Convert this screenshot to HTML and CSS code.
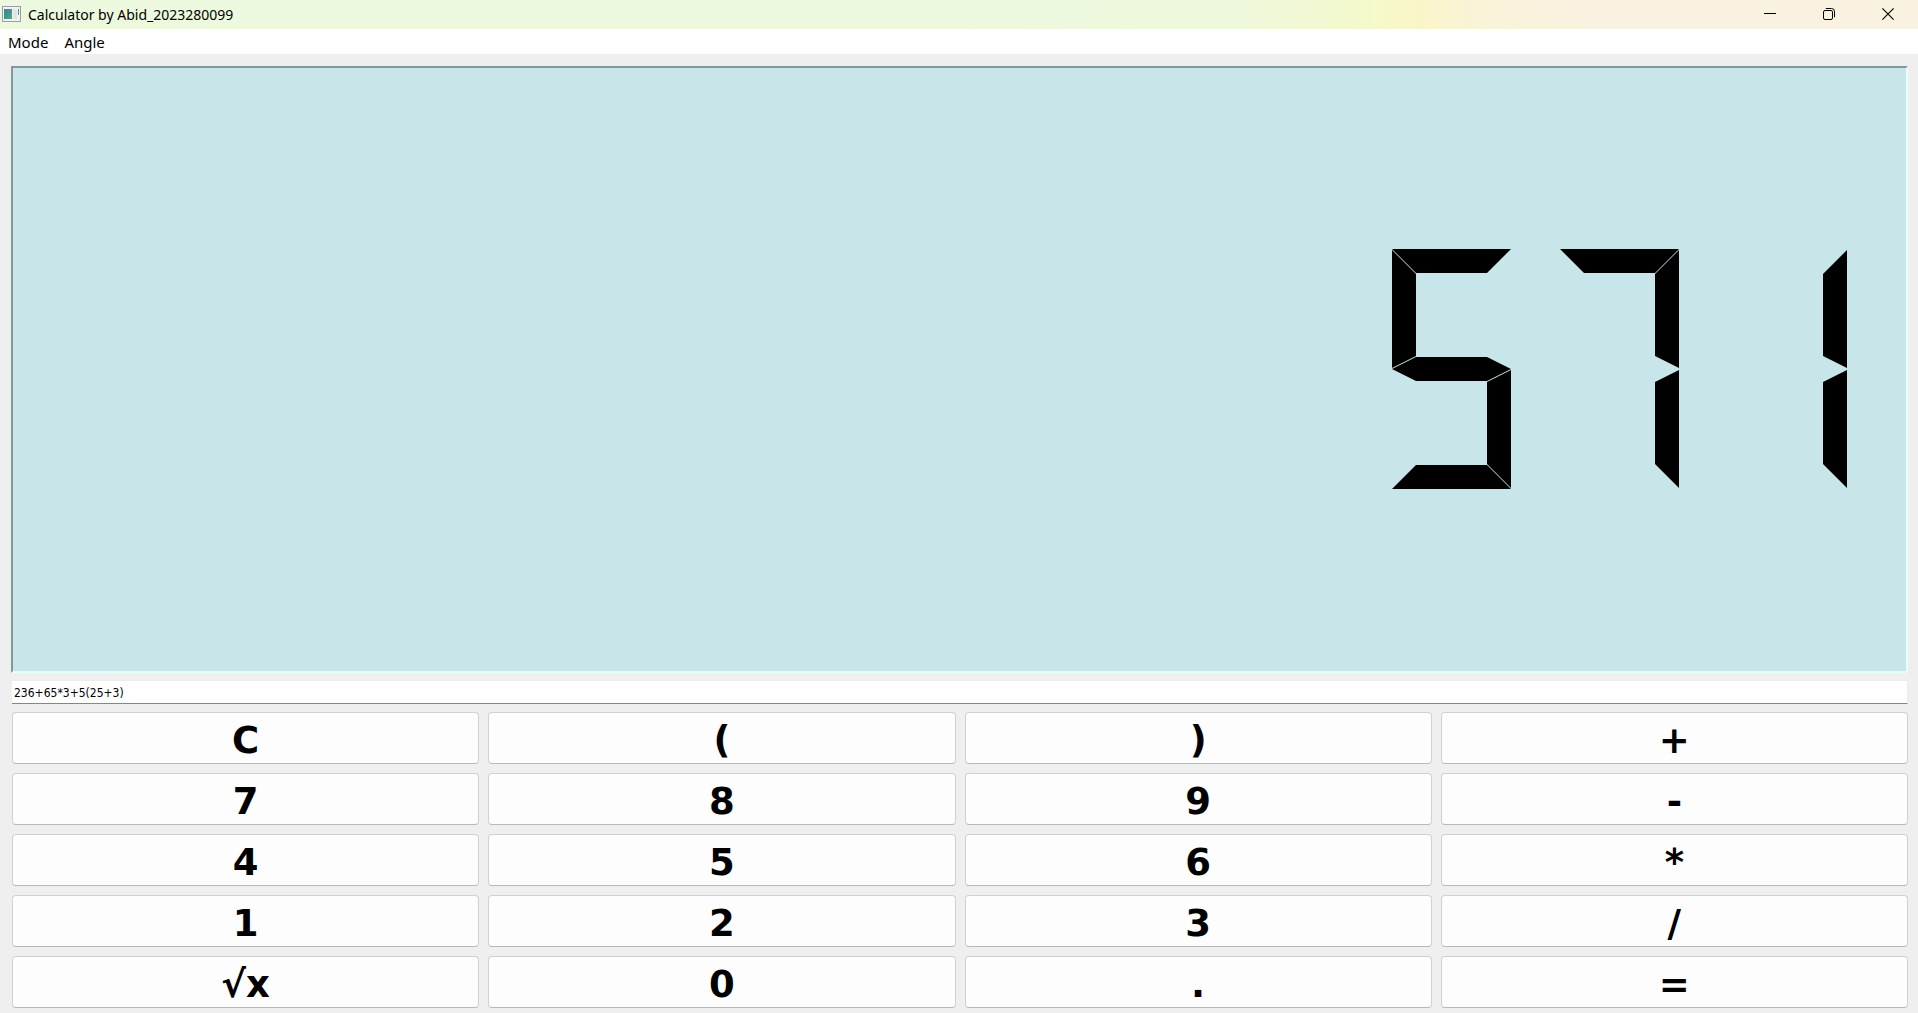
FILE: index.html
```html
<!DOCTYPE html>
<html lang="en">
<head>
<meta charset="utf-8">
<meta name="viewport" content="width=device-width, initial-scale=1">
<title>Calculator by Abid_2023280099</title>
<link rel="stylesheet" href="styles.css">
</head>
<body>
<header class="titlebar">
  <svg class="app-icon" width="19" height="16" viewBox="0 0 19 16" aria-hidden="true">
    <defs><linearGradient id="pane" x1="0" y1="0" x2="1" y2="1"><stop offset="0" stop-color="#3f7fa8"/><stop offset="1" stop-color="#4fa974"/></linearGradient></defs>
    <rect x=".5" y=".5" width="18" height="15" fill="#f2f2f4" stroke="#9a9fa6"/>
    <rect x="2" y="3" width="8" height="10" fill="url(#pane)"/>
    <rect x="11" y="3" width="4" height="10" fill="#e2e3e6"/>
    <rect x="16" y="3" width="1" height="6" fill="url(#pane)"/>
  </svg>
  <h1 class="title">Calculator by Abid_2023280099</h1>
  <div class="window-controls">
    <button class="window-button" type="button" aria-label="Minimize"><svg width="12" height="12" viewBox="0 0 12 12"><path d="M0 5.5H12" stroke="#000" fill="none"/></svg></button>
    <button class="window-button" type="button" aria-label="Restore"><svg width="12" height="12" viewBox="0 0 12 12" fill="none" stroke="#000"><rect x=".5" y="2.5" width="9" height="9" rx="1.5"/><path d="M2.8 .5H8.5Q11.5 .5 11.5 3.5V9.2"/></svg></button>
    <button class="window-button" type="button" aria-label="Close"><svg width="12" height="12" viewBox="0 0 12 12"><path d="M.4 .4L11.6 11.6M11.6 .4L.4 11.6" stroke="#000" stroke-width="1.1" fill="none"/></svg></button>
  </div>
</header>
<nav class="menubar">
  <button class="menu" type="button">Mode</button>
  <button class="menu" type="button">Angle</button>
</nav>
<main class="calculator">
  <output class="display" for="expression" aria-label="571">
    <span class="digit"><i class="seg top"></i><i class="seg upper-left"></i><i class="seg middle"></i><i class="seg lower-right"></i><i class="seg bottom"></i></span>
    <span class="digit"><i class="seg top"></i><i class="seg upper-right"></i><i class="seg lower-right"></i></span>
    <span class="digit"><i class="seg upper-right"></i><i class="seg lower-right"></i></span>
  </output>
  <input class="expression" id="expression" type="text" value="236+65*3+5(25+3)" aria-label="Expression">
  <div class="keypad">
    <button class="key" type="button">C</button>
    <button class="key" type="button">(</button>
    <button class="key" type="button">)</button>
    <button class="key" type="button">+</button>
    <button class="key" type="button">7</button>
    <button class="key" type="button">8</button>
    <button class="key" type="button">9</button>
    <button class="key" type="button">-</button>
    <button class="key" type="button">4</button>
    <button class="key" type="button">5</button>
    <button class="key" type="button">6</button>
    <button class="key" type="button">*</button>
    <button class="key" type="button">1</button>
    <button class="key" type="button">2</button>
    <button class="key" type="button">3</button>
    <button class="key" type="button">/</button>
    <button class="key" type="button">√x</button>
    <button class="key" type="button">0</button>
    <button class="key" type="button">.</button>
    <button class="key" type="button">=</button>
  </div>
</main>
</body>
</html>
```
FILE: styles.css
```css
* {
  box-sizing: border-box;
}

body {
  display: flex;
  flex-direction: column;
  min-height: 100vh;
  margin: 0;
  background: #efefef;
  color: #000;
  font-family: "Noto Sans", "Open Sans", sans-serif;
}

button {
  border: 0;
  background: none;
  color: inherit;
  font: inherit;
}

/* Title bar */
.titlebar {
  display: flex;
  align-items: center;
  height: 29px;
  padding: 0 1px 1px 2px;
  background: linear-gradient(to right, #edf9df 0%, #ecf9de 50%, #eef8dd 64%, #f2f8d2 69%, #f6f9c8 72%, #faf5c8 74%, #f9f3d8 77%, #f9f2e0 82%, #f9f2e0 100%);
}

.app-icon {
  margin-bottom: 1px;
}

.title {
  flex: 1;
  margin: 0 0 0 7px;
  padding-top: 2px;
  font-size: 14px;
  font-weight: 400;
  line-height: 26px;
}

.window-controls {
  display: flex;
}

.window-button {
  display: flex;
  align-items: center;
  justify-content: center;
  width: 59px;
  height: 28px;
  padding: 0;
}

/* Menu bar */
.menubar {
  display: flex;
  height: 25px;
  background: #fff;
}

.menu {
  padding: 1px 8px 0;
  font-size: 15px;
  line-height: 24px;
}

/* Calculator body */
.calculator {
  display: flex;
  flex: 1;
  flex-direction: column;
  padding: 12px 10px 5px 11px;
}

.display {
  display: flex;
  flex: 1;
  gap: 49px;
  align-items: center;
  justify-content: flex-end;
  min-height: 260px;
  padding: 0 59px 1px 0;
  border: 2px solid;
  border-color: #859899 #e4fdff #e4fdff #859899;
  background: #c8e5e9;
}

/* Seven-segment digit: every segment fills the cell and is clipped to its bar */
.digit {
  display: grid;
  width: 119px;
  height: 240px;
}

.seg {
  grid-area: 1 / 1;
  background: #000;
}

.top {
  clip-path: polygon(0 0, 119px 0, 95px 24px, 24px 24px);
}

.upper-left {
  clip-path: polygon(0 1px, 24px 25px, 24px 107px, 0 119px);
}

.upper-right {
  clip-path: polygon(119px 1px, 119px 119px, 95px 107px, 95px 25px);
}

.middle {
  clip-path: polygon(0 120px, 24px 108px, 95px 108px, 119px 120px, 95px 132px, 24px 132px);
}

.lower-right {
  clip-path: polygon(119px 121px, 119px 239px, 95px 215px, 95px 133px);
}

.bottom {
  clip-path: polygon(24px 216px, 95px 216px, 119px 240px, 0 240px);
}

.expression {
  height: 24px;
  margin: 7px 0 8px 1px;
  padding: 2px 2px 0;
  border: 1px solid #ececec;
  border-width: 1px 1px 1px 0;
  border-bottom-color: #868686;
  background: #fff;
  color: #000;
  font-family: "DejaVu Sans Condensed", "DejaVu Sans", sans-serif;
  font-size: 12px;
  outline: 0;
}

.keypad {
  display: grid;
  grid-template-columns: repeat(4, 1fr);
  gap: 9px;
  margin-left: 1px;
}

.key {
  height: 52px;
  padding: 6px 0 0;
  border: 1px solid #d0d0d0;
  border-bottom-color: #b9b9b9;
  border-radius: 4px;
  background: #fdfdfd;
  font-family: "DejaVu Sans", sans-serif;
  font-size: 37px;
  font-weight: 700;
  line-height: 44px;
}
```
